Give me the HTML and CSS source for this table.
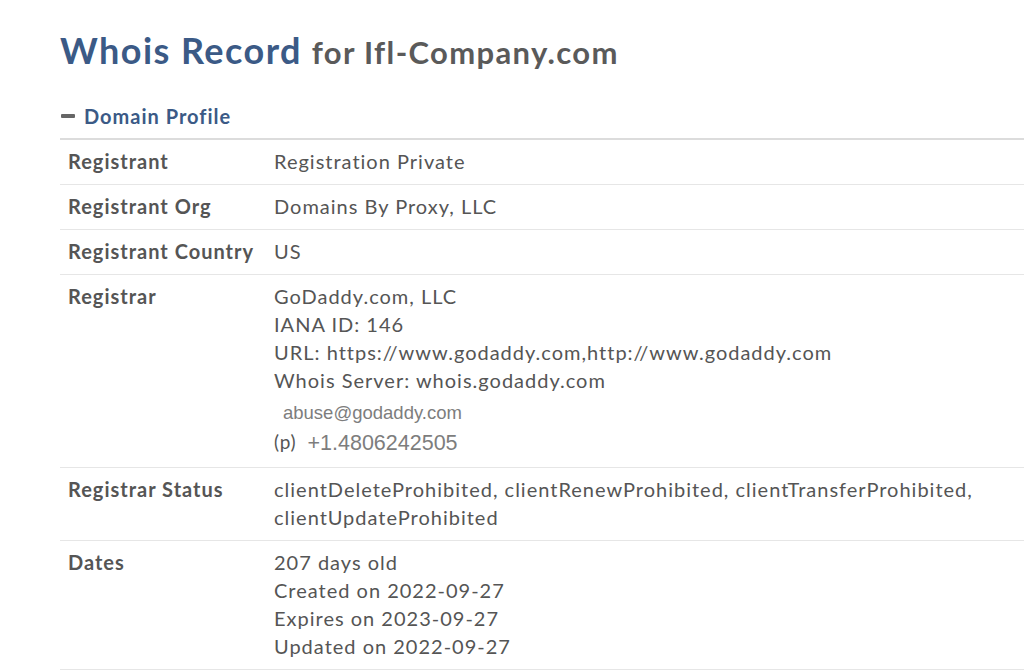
FILE: index.html
```html
<!DOCTYPE html>
<html>
<head>
<meta charset="utf-8">
<link rel="stylesheet" href="styles.css">
</head>
<body>
<div class="page">
  <h1 class="title"><span class="main">Whois Record</span> <span class="sub">for Ifl-Company.com</span></h1>
  <div class="section-head"><span class="minus"></span><span class="section-title">Domain Profile</span></div>
  <table class="profile">
    <tr><th>Registrant</th><td>Registration Private</td></tr>
    <tr><th>Registrant Org</th><td>Domains By Proxy, LLC</td></tr>
    <tr><th>Registrant Country</th><td>US</td></tr>
    <tr><th>Registrar</th><td>
      <div>GoDaddy.com, LLC</div>
      <div>IANA ID: 146</div>
      <div>URL: https://www.godaddy.com,http://www.godaddy.com</div>
      <div>Whois Server: whois.godaddy.com</div>
      <div class="email">abuse@godaddy.com</div>
      <div class="phone"><span class="p">(p)</span><span class="num">+1.4806242505</span></div>
    </td></tr>
    <tr><th>Registrar Status</th><td>clientDeleteProhibited, clientRenewProhibited, clientTransferProhibited, clientUpdateProhibited</td></tr>
    <tr><th>Dates</th><td>
      <div>207 days old</div>
      <div>Created on 2022-09-27</div>
      <div>Expires on 2023-09-27</div>
      <div>Updated on 2022-09-27</div>
    </td></tr>
  </table>
</div>
</body>
</html>
```

FILE: styles.css
```css
html, body {
  margin: 0;
  padding: 0;
  background: #fff;
}
body {
  font-family: Lato, "Open Sans", sans-serif;
  color: #555;
}
.page {
  padding: 25px 0 0 60px;
}
.title {
  margin: 0;
  font-weight: 700;
  line-height: 50px;
  white-space: nowrap;
}
.title .main {
  font-size: 36px;
  color: #3b5a86;
  letter-spacing: 1.45px;
}
.title .sub {
  font-size: 31px;
  color: #5a5a5a;
  letter-spacing: 1.35px;
  margin-left: 2px;
}
.section-head {
  display: flex;
  align-items: center;
  margin-top: 27px;
  height: 24px;
}
.minus {
  display: inline-block;
  width: 14px;
  height: 4px;
  background: #666;
  margin: 0 9px 0 1px;
  border-radius: 1px;
}
.section-title {
  font-size: 20px;
  font-weight: 700;
  color: #3b5a86;
  letter-spacing: 1px;
}
.profile {
  margin-top: 10px;
  width: 100%;
  border-collapse: collapse;
  border-top: 2px solid #dcdcdc;
  font-size: 20px;
  line-height: 28px;
  letter-spacing: 1px;
}
.profile th, .profile td {
  text-align: left;
  vertical-align: top;
  padding: 7px 8px 9px;
  border-bottom: 1px solid #e6e6e6;
}
.profile th {
  width: 190px;
  font-weight: 700;
  color: #555;
  white-space: nowrap;
  letter-spacing: 1px;
}
.profile td {
  font-weight: 400;
  color: #555;
}
.email {
  font-family: "Liberation Sans", Arial, sans-serif;
  font-size: 18.5px;
  color: #7d7d7d;
  letter-spacing: 0;
  padding-left: 9px;
  line-height: 28px;
  padding-top: 5px;
}
.phone {
  line-height: 28px;
  padding-bottom: 2px;
}
.phone .p {
  font-size: 19px;
  letter-spacing: 0.8px;
}
.phone .num {
  font-family: "Liberation Sans", Arial, sans-serif;
  font-size: 21.5px;
  color: #7d7d7d;
  letter-spacing: 0;
  margin-left: 11px;
  position: relative;
  top: 1px;
}
```
